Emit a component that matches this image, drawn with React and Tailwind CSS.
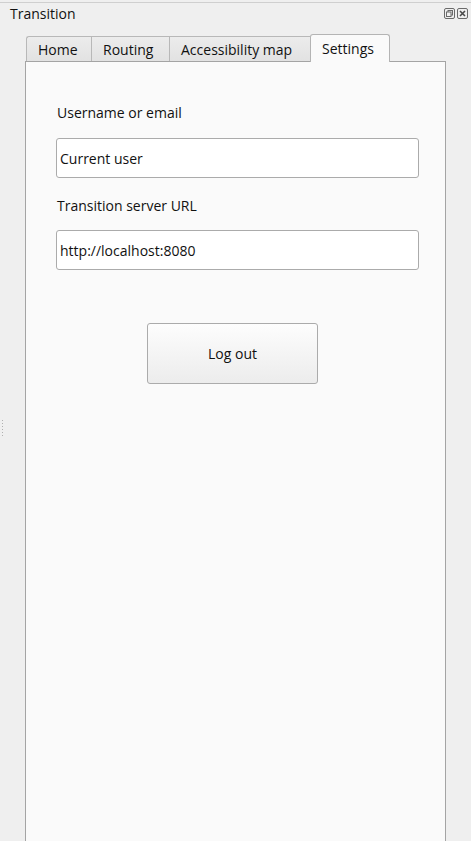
import React from 'react'

const TABS = [
  { label: 'Home', w: 'w-[65px]' },
  { label: 'Routing', w: 'w-[78px]' },
  { label: 'Accessibility map', w: 'w-[141px]' },
  { label: 'Settings', w: 'w-[80px]' },
]
const ACTIVE = 3

function DockButtons() {
  return (
    <div className="flex items-center gap-[2px]">
      {/* float */}
      <svg width="11" height="11" viewBox="0 0 11 11">
        <rect x="0.5" y="0.5" width="10" height="10" rx="1.5" fill="none" stroke="#6a6a6a" />
        <rect x="4" y="2.5" width="4.5" height="4.5" fill="none" stroke="#6a6a6a" />
        <rect x="2.5" y="4" width="4.5" height="4.5" fill="#efefef" stroke="#6a6a6a" />
      </svg>
      {/* close */}
      <svg width="11" height="11" viewBox="0 0 11 11">
        <rect x="0.5" y="0.5" width="10" height="10" rx="1.5" fill="none" stroke="#6a6a6a" />
        <path d="M3 3 L8 8 M8 3 L3 8" stroke="#4a4a4a" strokeWidth="1.6" />
      </svg>
    </div>
  )
}

export default function App() {
  return (
    <div
      className="relative w-[471px] h-[841px] overflow-hidden bg-[#efefef] text-[#1a1a1a]"
      style={{ fontFamily: '"Open Sans", "Noto Sans", sans-serif' }}
    >
      <div className="h-[2px]" />
      <div className="h-px bg-[#cfcfcf]" />

      {/* Title bar */}
      <div className="flex items-center justify-between h-[20px] pl-[10px] pr-[3px]">
        <span className="text-[14px] leading-[17px] text-[#111]">Transition</span>
        <DockButtons />
      </div>

      {/* splitter handle */}
      <div className="absolute left-[2px] top-[420px] flex flex-col gap-[2px]">
        {[0, 1, 2, 3, 4, 5].map(i => (
          <div key={i} className="w-px h-px bg-[#b0b0b0]" />
        ))}
      </div>

      {/* Tab widget */}
      <div className="ml-[25px] mt-[10px] w-[421px]">
        <div className="flex items-end h-[28px] pl-px">
          {TABS.map((t, i) =>
            i === ACTIVE ? (
              <div
                key={t.label}
                className={`${t.w} relative z-10 h-[28px] -mb-px pl-[11px] flex items-center bg-[#fafafa] border border-b-0 border-[#b4b4b4] rounded-t-[3px] text-[14px] text-[#111]`}
              >
                {t.label}
              </div>
            ) : (
              <div
                key={t.label}
                className={`${t.w} h-[25px] pl-[11px] flex items-center bg-gradient-to-b from-[#ececec] to-[#e2e2e2] border border-b-0 border-r-0 border-[#b8b8b8] first:rounded-tl-[3px] text-[14px] text-[#111]`}
              >
                {t.label}
              </div>
            )
          )}
        </div>

        {/* Panel */}
        <div className="h-[800px] bg-[#fafafa] border border-[#a4a4a4] pt-[42px] pl-[30px]">
          <div className="text-[14px] leading-[17px] pl-px text-[#111]">Username or email</div>
          <div className="mt-[17px] w-[363px] h-[40px] flex items-center pl-[3px] bg-white border border-[#ababab] rounded-[3px] text-[14px] text-[#111]">
            Current user
          </div>
          <div className="mt-[19px] text-[14px] leading-[17px] pl-px text-[#111]">Transition server URL</div>
          <div className="mt-[16px] w-[363px] h-[40px] flex items-center pl-[3px] bg-white border border-[#ababab] rounded-[3px] text-[14px] text-[#111]">
            http://localhost:8080
          </div>
          <div className="mt-[53px] ml-[91px] w-[171px] h-[61px] flex items-center justify-center bg-gradient-to-b from-[#fdfdfd] to-[#ececec] border border-[#ababab] rounded-[3px] text-[14px] text-[#111]">
            Log out
          </div>
        </div>
      </div>
    </div>
  )
}
